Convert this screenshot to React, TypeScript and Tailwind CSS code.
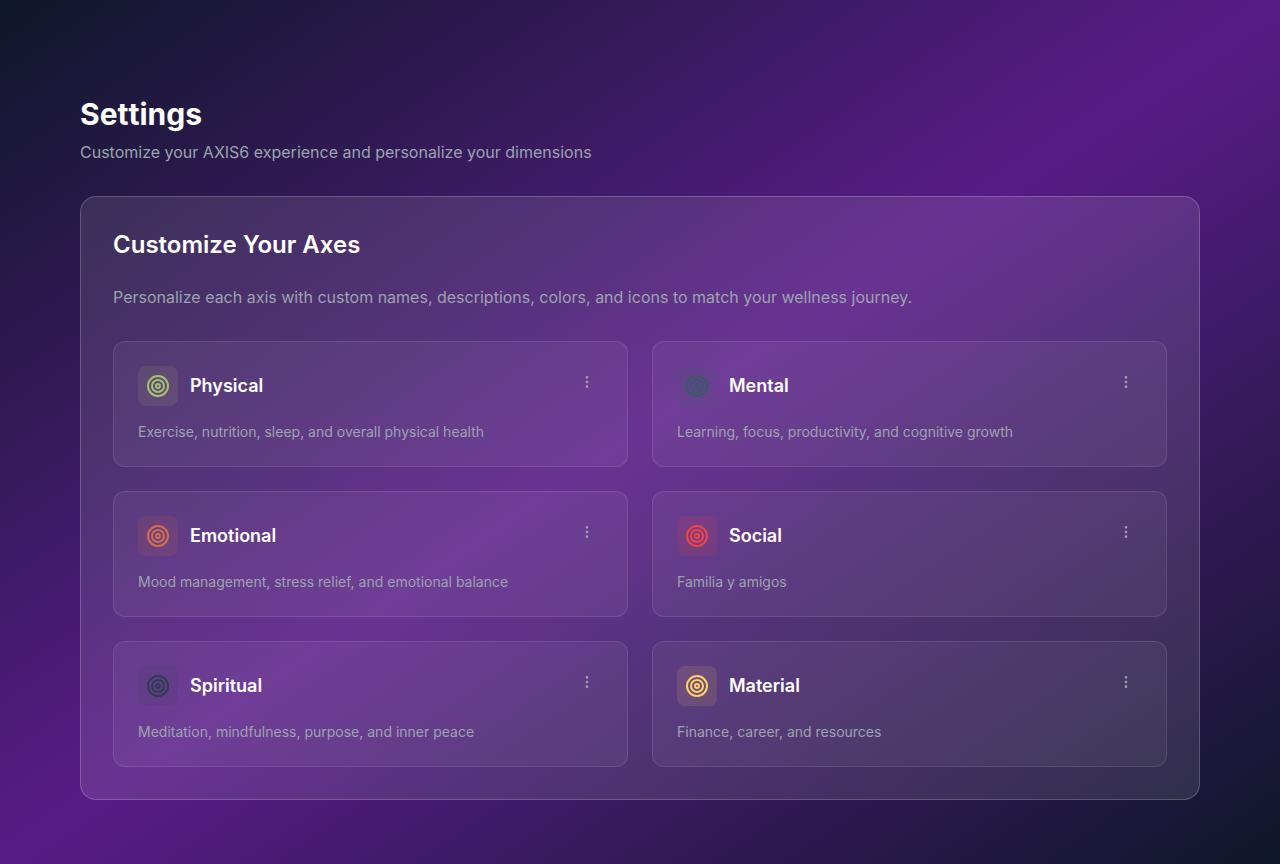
import { EllipsisVertical, Target } from 'lucide-react';

const axes = [
  { name: 'Physical', text: 'Exercise, nutrition, sleep, and overall physical health', color: '#A6C26F' },
  { name: 'Mental', text: 'Learning, focus, productivity, and cognitive growth', color: '#365D63' },
  { name: 'Emotional', text: 'Mood management, stress relief, and emotional balance', color: '#D36C50' },
  { name: 'Social', text: 'Familia y amigos', color: '#EF4444' },
  { name: 'Spiritual', text: 'Meditation, mindfulness, purpose, and inner peace', color: '#2C3E50' },
  { name: 'Material', text: 'Finance, career, and resources', color: '#FFD166' },
];

export default function App() {
  return (
    <div className="min-h-screen bg-linear-to-br/srgb from-[#0f172a] via-[#581c87] to-[#0f172a] px-20 pt-24 pb-16 font-[Inter,sans-serif] text-white antialiased">
      <h1 className="text-[30px] leading-9 font-bold [font-kerning:none]">Settings</h1>
      <p className="mt-2 text-base text-[#9ca3af]">Customize your AXIS6 experience and personalize your dimensions</p>
      <section className="mt-8 rounded-2xl border border-white/20 bg-white/10 p-8">
        <h2 className="text-2xl font-semibold">Customize Your Axes</h2>
        <p className="mt-6 text-base text-[#9ca3af]">
          Personalize each axis with custom names, descriptions, colors, and icons to match your wellness journey.
        </p>
        <div className="mt-8 grid grid-cols-2 gap-6">
          {axes.map((a) => (
            <div key={a.name} className="rounded-xl border border-white/10 bg-white/5 p-6">
              <div className="flex items-start justify-between">
                <div className="flex items-center gap-3">
                  <div className="flex size-10 items-center justify-center rounded-lg" style={{ backgroundColor: a.color + '20' }}>
                    <Target size={24} color={a.color} />
                  </div>
                  <h3 className="text-lg font-semibold">{a.name}</h3>
                </div>
                <button className="p-2 text-[#9ca3af]">
                  <EllipsisVertical size={16} />
                </button>
              </div>
              <p className="mt-4 text-sm text-[#9ca3af]">{a.text}</p>
            </div>
          ))}
        </div>
      </section>
    </div>
  );
}
